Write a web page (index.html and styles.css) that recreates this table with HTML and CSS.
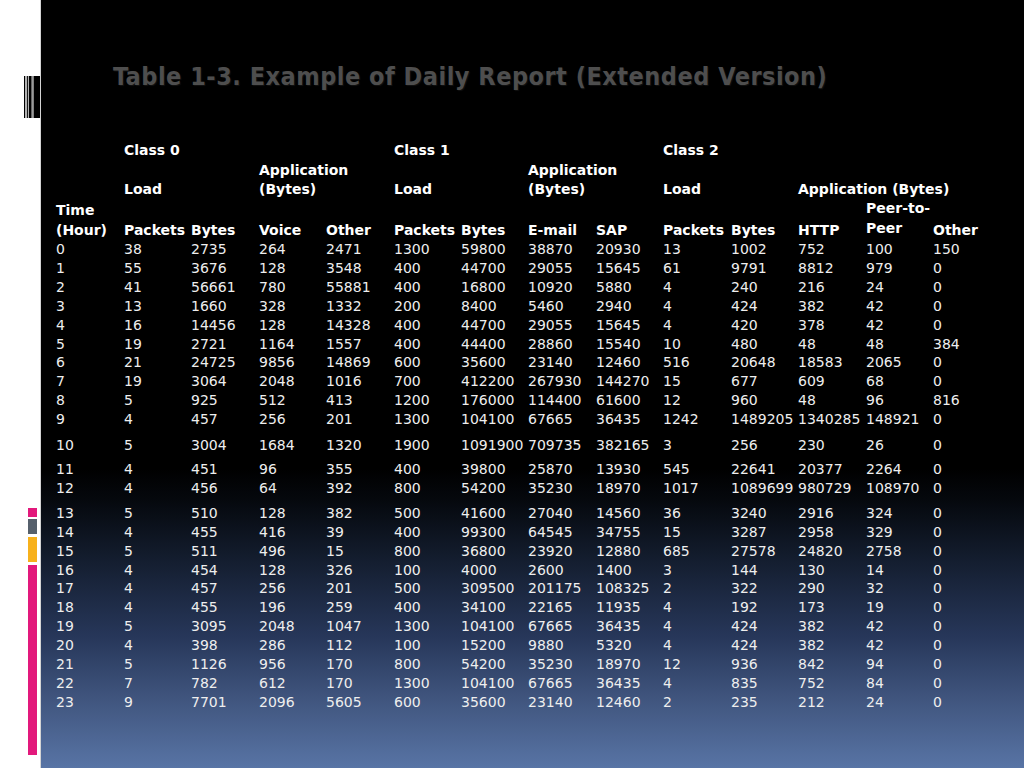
FILE: index.html
```html
<!DOCTYPE html>
<html>
<head>
<meta charset="utf-8">
<link rel="stylesheet" href="styles.css">
</head>
<body>
<div class="slide">
  <aside class="strip">
    <svg class="logo" width="16" height="42" viewBox="0 0 16 42">
      <rect x="0" y="0" width="1.3" height="42" fill="#000"/>
      <rect x="2.7" y="0" width="1.2" height="42" fill="#000"/>
      <rect x="4.7" y="0" width="3" height="42" fill="#000"/>
      <rect x="7.7" y="0" width="2" height="42" fill="#9a9a9a"/>
      <rect x="9.7" y="0" width="6.3" height="42" fill="#000"/>
    </svg>
    <div class="bars">
      <span class="bar bar-pink-s"></span>
      <span class="bar bar-gray"></span>
      <span class="bar bar-yellow"></span>
      <span class="bar bar-pink-l"></span>
    </div>
  </aside>
  <main class="content">
    <h1 class="title">Table 1-3. Example of Daily Report (Extended Version)</h1>
    <table class="report">
      <colgroup>
        <col class="c68"><col class="c67"><col class="c68"><col class="c67"><col class="c68"><col class="c67"><col class="c67"><col class="c68"><col class="c67"><col class="c68"><col class="c67"><col class="c68"><col class="c67"><col class="c77">
      </colgroup>
      <thead>
        <tr class="h1">
          <th></th><th colspan="4">Class 0</th><th colspan="4">Class 1</th><th colspan="5">Class 2</th>
        </tr>
        <tr class="h2">
          <th></th><th colspan="2">Load</th><th colspan="2">Application (Bytes)</th><th colspan="2">Load</th><th colspan="2">Application (Bytes)</th><th colspan="2">Load</th><th colspan="3">Application (Bytes)</th>
        </tr>
        <tr class="h3">
          <th>Time<br>(Hour)</th><th>Packets</th><th>Bytes</th><th>Voice</th><th>Other</th><th>Packets</th><th>Bytes</th><th>E-mail</th><th>SAP</th><th>Packets</th><th>Bytes</th><th>HTTP</th><th class="p2p">Peer-to-<br>Peer</th><th>Other</th>
        </tr>
      </thead>
      <tbody>
        <tr><td>0</td><td>38</td><td>2735</td><td>264</td><td>2471</td><td>1300</td><td>59800</td><td>38870</td><td>20930</td><td>13</td><td>1002</td><td>752</td><td>100</td><td>150</td></tr>
        <tr><td>1</td><td>55</td><td>3676</td><td>128</td><td>3548</td><td>400</td><td>44700</td><td>29055</td><td>15645</td><td>61</td><td>9791</td><td>8812</td><td>979</td><td>0</td></tr>
        <tr><td>2</td><td>41</td><td>56661</td><td>780</td><td>55881</td><td>400</td><td>16800</td><td>10920</td><td>5880</td><td>4</td><td>240</td><td>216</td><td>24</td><td>0</td></tr>
        <tr><td>3</td><td>13</td><td>1660</td><td>328</td><td>1332</td><td>200</td><td>8400</td><td>5460</td><td>2940</td><td>4</td><td>424</td><td>382</td><td>42</td><td>0</td></tr>
        <tr><td>4</td><td>16</td><td>14456</td><td>128</td><td>14328</td><td>400</td><td>44700</td><td>29055</td><td>15645</td><td>4</td><td>420</td><td>378</td><td>42</td><td>0</td></tr>
        <tr><td>5</td><td>19</td><td>2721</td><td>1164</td><td>1557</td><td>400</td><td>44400</td><td>28860</td><td>15540</td><td>10</td><td>480</td><td>48</td><td>48</td><td>384</td></tr>
        <tr><td>6</td><td>21</td><td>24725</td><td>9856</td><td>14869</td><td>600</td><td>35600</td><td>23140</td><td>12460</td><td>516</td><td>20648</td><td>18583</td><td>2065</td><td>0</td></tr>
        <tr><td>7</td><td>19</td><td>3064</td><td>2048</td><td>1016</td><td>700</td><td>412200</td><td>267930</td><td>144270</td><td>15</td><td>677</td><td>609</td><td>68</td><td>0</td></tr>
        <tr><td>8</td><td>5</td><td>925</td><td>512</td><td>413</td><td>1200</td><td>176000</td><td>114400</td><td>61600</td><td>12</td><td>960</td><td>48</td><td>96</td><td>816</td></tr>
        <tr><td>9</td><td>4</td><td>457</td><td>256</td><td>201</td><td>1300</td><td>104100</td><td>67665</td><td>36435</td><td>1242</td><td>1489205</td><td>1340285</td><td>148921</td><td>0</td></tr>
        <tr class="gap-a"><td>10</td><td>5</td><td>3004</td><td>1684</td><td>1320</td><td>1900</td><td>1091900</td><td>709735</td><td>382165</td><td>3</td><td>256</td><td>230</td><td>26</td><td>0</td></tr>
        <tr class="gap-b"><td>11</td><td>4</td><td>451</td><td>96</td><td>355</td><td>400</td><td>39800</td><td>25870</td><td>13930</td><td>545</td><td>22641</td><td>20377</td><td>2264</td><td>0</td></tr>
        <tr><td>12</td><td>4</td><td>456</td><td>64</td><td>392</td><td>800</td><td>54200</td><td>35230</td><td>18970</td><td>1017</td><td>1089699</td><td>980729</td><td>108970</td><td>0</td></tr>
        <tr class="gap-c"><td>13</td><td>5</td><td>510</td><td>128</td><td>382</td><td>500</td><td>41600</td><td>27040</td><td>14560</td><td>36</td><td>3240</td><td>2916</td><td>324</td><td>0</td></tr>
        <tr><td>14</td><td>4</td><td>455</td><td>416</td><td>39</td><td>400</td><td>99300</td><td>64545</td><td>34755</td><td>15</td><td>3287</td><td>2958</td><td>329</td><td>0</td></tr>
        <tr><td>15</td><td>5</td><td>511</td><td>496</td><td>15</td><td>800</td><td>36800</td><td>23920</td><td>12880</td><td>685</td><td>27578</td><td>24820</td><td>2758</td><td>0</td></tr>
        <tr><td>16</td><td>4</td><td>454</td><td>128</td><td>326</td><td>100</td><td>4000</td><td>2600</td><td>1400</td><td>3</td><td>144</td><td>130</td><td>14</td><td>0</td></tr>
        <tr><td>17</td><td>4</td><td>457</td><td>256</td><td>201</td><td>500</td><td>309500</td><td>201175</td><td>108325</td><td>2</td><td>322</td><td>290</td><td>32</td><td>0</td></tr>
        <tr><td>18</td><td>4</td><td>455</td><td>196</td><td>259</td><td>400</td><td>34100</td><td>22165</td><td>11935</td><td>4</td><td>192</td><td>173</td><td>19</td><td>0</td></tr>
        <tr><td>19</td><td>5</td><td>3095</td><td>2048</td><td>1047</td><td>1300</td><td>104100</td><td>67665</td><td>36435</td><td>4</td><td>424</td><td>382</td><td>42</td><td>0</td></tr>
        <tr><td>20</td><td>4</td><td>398</td><td>286</td><td>112</td><td>100</td><td>15200</td><td>9880</td><td>5320</td><td>4</td><td>424</td><td>382</td><td>42</td><td>0</td></tr>
        <tr><td>21</td><td>5</td><td>1126</td><td>956</td><td>170</td><td>800</td><td>54200</td><td>35230</td><td>18970</td><td>12</td><td>936</td><td>842</td><td>94</td><td>0</td></tr>
        <tr><td>22</td><td>7</td><td>782</td><td>612</td><td>170</td><td>1300</td><td>104100</td><td>67665</td><td>36435</td><td>4</td><td>835</td><td>752</td><td>84</td><td>0</td></tr>
        <tr><td>23</td><td>9</td><td>7701</td><td>2096</td><td>5605</td><td>600</td><td>35600</td><td>23140</td><td>12460</td><td>2</td><td>235</td><td>212</td><td>24</td><td>0</td></tr>
      </tbody>
    </table>
  </main>
</div>
</body>
</html>
```
FILE: styles.css
```css
html, body {
  margin: 0;
  padding: 0;
  width: 1024px;
  height: 768px;
  overflow: hidden;
  background: #000;
}

.slide {
  display: flex;
  width: 1024px;
  height: 768px;
}

.strip {
  width: 40px;
  flex: none;
  background: #fff;
  border-right: 1px solid #d4d4d4;
  display: flex;
  flex-direction: column;
}

.logo {
  display: block;
  margin-top: 76px;
  margin-left: 24px;
}

.bars {
  display: flex;
  flex-direction: column;
  margin-top: 390px;
  margin-left: 28px;
  width: 9px;
}

.bar {
  display: block;
  width: 9px;
}

.bar-pink-s { height: 9px; background: #e2197c; }
.bar-gray { height: 15px; margin-top: 2px; background: #56606c; }
.bar-yellow { height: 25px; margin-top: 3px; background: #f7b11c; }
.bar-pink-l { height: 190px; margin-top: 3px; background: #e2197c; }

.content {
  flex: 1;
  padding: 62px 0 0 15px;
  background: linear-gradient(to bottom, #000 0%, #000 61%, #05080d 65%, #121b2b 72%, #27375a 83%, #40557e 91%, #5874a5 100%);
}

.title {
  margin: 0 0 0 57px;
  height: 30px;
  font-family: "DejaVu Sans Condensed", "DejaVu Sans", sans-serif;
  font-stretch: condensed;
  font-weight: bold;
  font-size: 25px;
  letter-spacing: 0.5px;
  line-height: 30px;
  color: #4e4e4e;
  text-shadow: 1px 1px 1px #111;
  white-space: nowrap;
}

.report {
  margin-top: 49px;
  border-collapse: collapse;
  border-spacing: 0;
  table-layout: fixed;
  width: 954px;
  font-family: "DejaVu Sans", Verdana, sans-serif;
  font-size: 14px;
  color: #eeeeee;
}

.c68 { width: 68px; }
.c67 { width: 67px; }
.c77 { width: 77px; }

.report th,
.report td {
  padding: 0;
  text-align: left;
  white-space: nowrap;
  vertical-align: bottom;
}

.report th {
  font-weight: bold;
  color: #ffffff;
  line-height: 19px;
}

.report .h2 th {
  padding-top: 1px;
  white-space: normal;
}

.report .h3 th {
  padding-top: 0;
  line-height: 19.5px;
}

.report .h3 th.p2p {
  padding-bottom: 2px;
}

.report td {
  line-height: 18.9px;
  height: 18.9px;
}

.report .gap-a td { padding-top: 6.5px; }
.report .gap-b td { padding-top: 5.5px; }
.report .gap-c td { padding-top: 6px; }
```
